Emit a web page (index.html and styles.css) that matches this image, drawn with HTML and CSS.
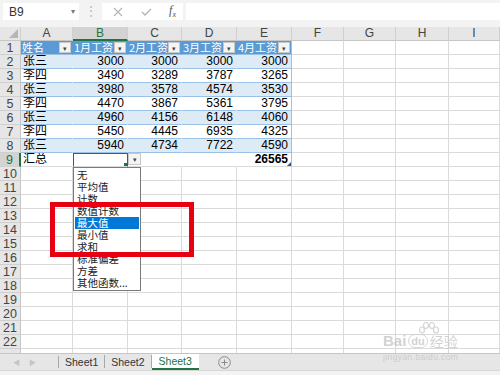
FILE: index.html
```html
<!DOCTYPE html>
<html lang="zh">
<head>
<meta charset="utf-8">
<title>Excel</title>
<link rel="stylesheet" href="styles.css">
</head>
<body>
<div class="app">
  <div class="fbar">
    <div class="namebox"><span>B9</span><span class="nb-arrow">▾</span></div>
    <div class="dots">⋮</div>
    <div class="fxbox">
      <svg width="10" height="10" viewBox="0 0 10 10"><path d="M1 1L9 9M9 1L1 9" stroke="#b4b4b4" stroke-width="1.1" fill="none"/></svg>
      <svg width="11" height="10" viewBox="0 0 11 10"><path d="M1 5L4 8L10 2" stroke="#b4b4b4" stroke-width="1.3" fill="none"/></svg>
      <span class="fx">f<sub>x</sub></span>
    </div>
    <div class="finput"></div>
  </div>

  <div class="sheet">
    <div class="grid">
      <div class="ch corner"><span class="tri"></span></div>
      <div class="ch">A</div><div class="ch sel">B</div><div class="ch">C</div><div class="ch">D</div><div class="ch">E</div><div class="ch">F</div><div class="ch">G</div><div class="ch">H</div><div class="ch">I</div>

      <div class="rh">1</div>
      <div class="c th"><span class="tt">姓名</span><span class="fb">▾</span></div>
      <div class="c th"><span class="tt">1月工资</span><span class="fb">▾</span></div>
      <div class="c th"><span class="tt">2月工资</span><span class="fb">▾</span></div>
      <div class="c th"><span class="tt">3月工资</span><span class="fb">▾</span></div>
      <div class="c th last"><span class="tt">4月工资</span><span class="fb">▾</span></div>
      <div class="c"></div><div class="c"></div><div class="c"></div><div class="c"></div>

      <div class="rh">2</div>
      <div class="c b">张三</div><div class="c b n">3000</div><div class="c b n">3000</div><div class="c b n">3000</div><div class="c b n last">3000</div>
      <div class="c"></div><div class="c"></div><div class="c"></div><div class="c"></div>

      <div class="rh">3</div>
      <div class="c w">李四</div><div class="c w n">3490</div><div class="c w n">3289</div><div class="c w n">3787</div><div class="c w n last">3265</div>
      <div class="c"></div><div class="c"></div><div class="c"></div><div class="c"></div>

      <div class="rh">4</div>
      <div class="c b">张三</div><div class="c b n">3980</div><div class="c b n">3578</div><div class="c b n">4574</div><div class="c b n last">3530</div>
      <div class="c"></div><div class="c"></div><div class="c"></div><div class="c"></div>

      <div class="rh">5</div>
      <div class="c w">李四</div><div class="c w n">4470</div><div class="c w n">3867</div><div class="c w n">5361</div><div class="c w n last">3795</div>
      <div class="c"></div><div class="c"></div><div class="c"></div><div class="c"></div>

      <div class="rh">6</div>
      <div class="c b">张三</div><div class="c b n">4960</div><div class="c b n">4156</div><div class="c b n">6148</div><div class="c b n last">4060</div>
      <div class="c"></div><div class="c"></div><div class="c"></div><div class="c"></div>

      <div class="rh">7</div>
      <div class="c w">李四</div><div class="c w n">5450</div><div class="c w n">4445</div><div class="c w n">6935</div><div class="c w n last">4325</div>
      <div class="c"></div><div class="c"></div><div class="c"></div><div class="c"></div>

      <div class="rh">8</div>
      <div class="c b">张三</div><div class="c b n">5940</div><div class="c b n">4734</div><div class="c b n">7722</div><div class="c b n last">4590</div>
      <div class="c"></div><div class="c"></div><div class="c"></div><div class="c"></div>

      <div class="rh rsel">9</div>
      <div class="c tot">汇总</div><div class="c tot active"><span class="fill"></span></div><div class="c tot"></div><div class="c tot"></div><div class="c tot n bold last">26565<span class="corn"></span></div>
      <div class="c"></div><div class="c"></div><div class="c"></div><div class="c"></div>

      <div class="rh">10</div><div class="c"></div><div class="c"></div><div class="c"></div><div class="c"></div><div class="c"></div><div class="c"></div><div class="c"></div><div class="c"></div><div class="c"></div>
      <div class="rh">11</div><div class="c"></div><div class="c"></div><div class="c"></div><div class="c"></div><div class="c"></div><div class="c"></div><div class="c"></div><div class="c"></div><div class="c"></div>
      <div class="rh">12</div><div class="c"></div><div class="c"></div><div class="c"></div><div class="c"></div><div class="c"></div><div class="c"></div><div class="c"></div><div class="c"></div><div class="c"></div>
      <div class="rh">13</div><div class="c"></div><div class="c"></div><div class="c"></div><div class="c"></div><div class="c"></div><div class="c"></div><div class="c"></div><div class="c"></div><div class="c"></div>
      <div class="rh">14</div><div class="c"></div><div class="c"></div><div class="c"></div><div class="c"></div><div class="c"></div><div class="c"></div><div class="c"></div><div class="c"></div><div class="c"></div>
      <div class="rh">15</div><div class="c"></div><div class="c"></div><div class="c"></div><div class="c"></div><div class="c"></div><div class="c"></div><div class="c"></div><div class="c"></div><div class="c"></div>
      <div class="rh">16</div><div class="c"></div><div class="c"></div><div class="c"></div><div class="c"></div><div class="c"></div><div class="c"></div><div class="c"></div><div class="c"></div><div class="c"></div>
      <div class="rh">17</div><div class="c"></div><div class="c"></div><div class="c"></div><div class="c"></div><div class="c"></div><div class="c"></div><div class="c"></div><div class="c"></div><div class="c"></div>
      <div class="rh">18</div><div class="c"></div><div class="c"></div><div class="c"></div><div class="c"></div><div class="c"></div><div class="c"></div><div class="c"></div><div class="c"></div><div class="c"></div>
      <div class="rh">19</div><div class="c"></div><div class="c"></div><div class="c"></div><div class="c"></div><div class="c"></div><div class="c"></div><div class="c"></div><div class="c"></div><div class="c"></div>
      <div class="rh">20</div><div class="c"></div><div class="c"></div><div class="c"></div><div class="c"></div><div class="c"></div><div class="c"></div><div class="c"></div><div class="c"></div><div class="c"></div>
      <div class="rh">21</div><div class="c"></div><div class="c"></div><div class="c"></div><div class="c"></div><div class="c"></div><div class="c"></div><div class="c"></div><div class="c"></div><div class="c"></div>
      <div class="rh">22</div><div class="c"></div><div class="c"></div><div class="c"></div><div class="c"></div><div class="c"></div><div class="c"></div><div class="c"></div><div class="c"></div><div class="c"></div>
      <div class="rh"></div><div class="c"></div><div class="c"></div><div class="c"></div><div class="c"></div><div class="c"></div><div class="c"></div><div class="c"></div><div class="c"></div><div class="c"></div>
    </div>

    <div class="ddbtn">▾</div>
    <ul class="dlist">
      <li>无</li>
      <li>平均值</li>
      <li>计数</li>
      <li>数值计数</li>
      <li class="hi">最大值</li>
      <li>最小值</li>
      <li>求和</li>
      <li>标准偏差</li>
      <li>方差</li>
      <li>其他函数...</li>
    </ul>
    <div class="redbox"></div>
  </div>

  <div class="tabbar">
    <div class="nav"><span>◀</span><span>▶</span></div>
    <div class="tab">Sheet1</div>
    <div class="tab">Sheet2</div>
    <div class="tab act">Sheet3</div>
    <div class="add">
      <svg width="13" height="13" viewBox="0 0 13 13"><circle cx="6.5" cy="6.5" r="5.8" fill="none" stroke="#8a8a8a" stroke-width="1"/><path d="M6.5 3.5V9.5M3.5 6.5H9.5" stroke="#8a8a8a" stroke-width="1"/></svg>
    </div>
  </div>
  <div class="status"></div>

  <div class="wm">
    <svg class="paw" width="26" height="13" viewBox="0 0 26 13">
      <g fill="none" stroke="#d4d4d4" stroke-width="1.2">
        <ellipse cx="6" cy="8" rx="2.5" ry="3"/>
        <ellipse cx="10" cy="3.5" rx="2.5" ry="3"/>
        <ellipse cx="16" cy="3.5" rx="2.5" ry="3"/>
        <ellipse cx="20" cy="8" rx="2.5" ry="3"/>
      </g>
    </svg>
    <div class="wm1"><span>Bai</span><span class="du">du</span><span class="jy">经验</span></div>
    <div class="wm2">jingyan.baidu.com</div>
  </div>
</div>
</body>
</html>
```

FILE: styles.css
```css
* { box-sizing: border-box; }
html, body { margin: 0; padding: 0; }
body {
  width: 500px; height: 375px; overflow: hidden;
  font-family: "Liberation Sans", "Noto Sans CJK SC", sans-serif;
  background: #fff; color: #000;
}
.app { width: 500px; height: 375px; display: flex; flex-direction: column; position: relative; }

.fbar {
  height: 27px; background: #f3f3f3; display: flex; align-items: flex-start;
  padding: 3px 0 0 3px;
}
.namebox {
  width: 76px; height: 17px; background: #fff; display: flex; align-items: center;
  justify-content: space-between; padding: 0 4px 0 6px; font-size: 12px; color: #333;
}
.nb-arrow { font-size: 8px; color: #777; }
.dots { width: 23px; text-align: center; color: #b8b8b8; font-size: 12px; line-height: 17px; }
.fxbox {
  width: 81px; height: 17px; background: #fff; display: flex; align-items: center;
  justify-content: space-between; padding: 0 7px 0 11px;
}
.fx { font-family: "Liberation Serif", serif; font-style: italic; font-size: 12px; color: #555; }
.fx sub { font-size: 8px; }
.finput { flex: 1; height: 17px; background: #fff; margin-left: 3px; }

.sheet { position: relative; height: 326px; overflow: hidden; background: #fff; }
.grid {
  display: grid;
  grid-template-columns: 21px 52px 55px 54px 55px 55px 52px 52px 53px 51px;
  grid-auto-rows: 14px;
}
.ch {
  background: #e6e6e6; border-right: 1px solid #d0d0d0; border-bottom: 1px solid #c6c6c6;
  font-size: 12px; color: #444; text-align: center; line-height: 13px; position: relative;
}
.ch.sel { background: #d3d3d3; color: #217346; border-bottom: 2px solid #217346; }
.tri {
  position: absolute; right: 2px; bottom: 2px; width: 0; height: 0;
  border-left: 9px solid transparent; border-bottom: 9px solid #b6b6b6;
}
.rh {
  background: #e6e6e6; border-right: 1px solid #c6c6c6; border-bottom: 1px solid #d0d0d0;
  font-size: 12.5px; color: #444; text-align: center; line-height: 14px;
}
.rh.rsel { background: #d3d3d3; color: #217346; border-right: 2px solid #217346; }
.c {
  border-right: 1px solid #dadada; border-bottom: 1px solid #dadada;
  font-size: 12px; line-height: 13px; padding: 0 2px; white-space: nowrap; overflow: hidden;
  position: relative;
}
.c.n { text-align: right; padding-right: 3px; }
.c.th {
  background: #5b9bd5; color: #fff; border-right: 1px solid #5b9bd5; border-bottom: 1px solid #9bc2e6;
  font-family: "Noto Sans CJK SC", sans-serif; font-size: 11px; padding-left: 1px;
  line-height: 13px; overflow: visible; display: flex; align-items: center;
}
.tt { display: block; line-height: 13px; }
.fb {
  position: absolute; right: 1px; top: 1px; width: 12px; height: 11px; background: #f4f4f4;
  border: 1px solid #c8c8c8; color: #444; font-size: 7px; line-height: 10px; text-align: center;
}
.c.b { background: #ddebf7; border-right-color: #ddebf7; border-bottom-color: #9bc2e6; }
.c.w { background: #fff; border-right-color: #fff; border-bottom-color: #9bc2e6; }
.c.last { border-right-color: #9bc2e6; }
.c.th.last { border-right-color: #9bc2e6; }
.c.tot { border-right-color: #fff; border-bottom-color: #dadada; line-height: 13px; }
.c.tot.last { border-right-color: #9bc2e6; }
.bold { font-weight: bold; }
.c.active { border: 1px solid #217346; border-bottom-color: #dadada; }
.fill { position: absolute; right: -1px; bottom: -1px; width: 4px; height: 4px; background: #217346; }
.corn {
  position: absolute; right: 0; bottom: 0; width: 0; height: 0;
  border-left: 4px solid transparent; border-bottom: 4px solid #2f5597;
}

.ddbtn {
  position: absolute; left: 128px; top: 126px; width: 13px; height: 12px;
  background: #f4f4f4; border: 1px solid #c8c8c8; font-size: 7px; color: #444; text-align: center; line-height: 11px;
}
.dlist {
  position: absolute; left: 73px; top: 140px; width: 68px; margin: 0; padding: 1px 1px;
  list-style: none; background: #fff; border: 1px solid #7a7a7a;
  font-family: "Noto Sans CJK SC", sans-serif; font-size: 10.5px; color: #222;
}
.dlist li { height: 12px; line-height: 12px; padding-left: 2px; white-space: nowrap; }
.dlist li.hi { background: #0078d7; color: #fff; }
.redbox {
  position: absolute; left: 50px; top: 175px; width: 144px; height: 55px;
  border: 5px solid #e60012;
}

.tabbar {
  height: 17px; background: #e6e6e6; border-top: 1px solid #c6c6c6; display: flex; align-items: stretch;
  font-size: 10.5px; color: #333;
}
.nav { width: 59px; display: flex; gap: 9px; padding-left: 13px; align-items: center; font-size: 7px; color: #c4c4c4; border-right: 1px solid #a8a8a8; margin: 2px 0; }
.tab { padding: 0 6px; line-height: 14px; border-right: 1px solid #a8a8a8; margin: 1px 0 2px; }
.tab.act { background: #fff; color: #217346; border-bottom: 2px solid #217346; border-right: none; margin: 0; padding: 0 7px; line-height: 15px; }
.add { margin-left: 19px; display: flex; align-items: center; }
.status { height: 5px; background: #f3f3f3; border-top: 1px solid #d6d6d6; }

.wm {
  position: absolute; left: 383px; top: 322px; width: 92px;
  display: flex; flex-direction: column; align-items: flex-start;
  color: rgba(195,195,195,0.75);
}
.paw { margin-left: 33px; }
.wm1 { display: flex; align-items: center; font-size: 15px; font-weight: bold; line-height: 16px; margin-top: -2px; }
.du { font-size: 11px; border: 1.5px solid rgba(205,205,205,0.8); border-radius: 8px; padding: 0 2px; margin: 0 2px; line-height: 12px; }
.jy { font-family: "Noto Sans CJK SC", sans-serif; font-size: 14px; font-weight: normal; }
.wm2 { font-size: 8.5px; line-height: 10px; letter-spacing: 0.4px; margin-top: 3px; }
```
